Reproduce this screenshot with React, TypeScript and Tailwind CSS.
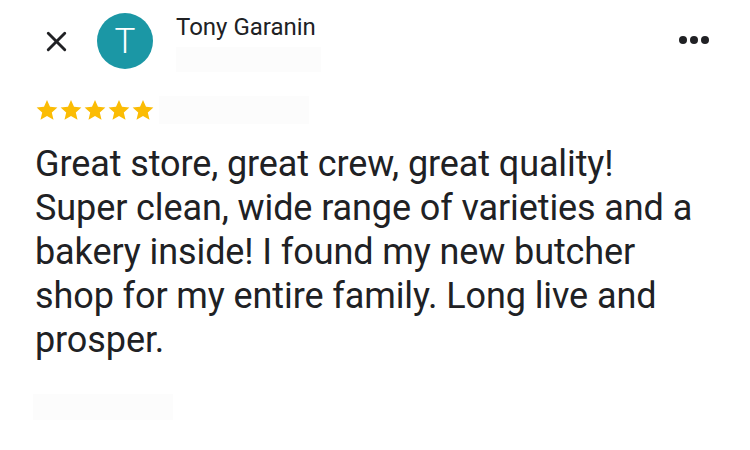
import { X } from 'lucide-react';

function Star() {
  return (
    <svg viewBox="0 0 24 24" className="w-[24px] h-[24px]" fill="#fbbc04">
      <path d="M12 2l3 6.8 7.4.7-5.6 4.9 1.7 7.3L12 17.9l-6.5 3.8 1.7-7.3-5.6-4.9 7.4-.7z" />
    </svg>
  );
}

export default function App() {
  return (
    <div className="w-[750px] h-[450px] bg-white relative overflow-hidden font-['Roboto',sans-serif] text-[#202124]">
      {/* Header */}
      <div className="flex items-start pt-[13px]">
        <div className="w-[97px] h-[56px] flex items-center justify-end pr-[24px]">
          <X size={33} strokeWidth={2.1} className="text-[#202124]" />
        </div>
        <div className="w-[56px] h-[56px] rounded-full bg-[#1b97a5] flex items-center justify-center text-white text-[35px] font-light leading-none">
          T
        </div>
        <div className="ml-[23px] flex flex-col">
          <div className="text-[24px] leading-[28px]">Tony Garanin</div>
          <div className="mt-[6px] w-[145px] h-[25px] bg-[#fcfcfc]" />
        </div>
        <div className="ml-auto mr-[41px] mt-[23px] flex gap-[3px]">
          <span className="w-[8px] h-[8px] rounded-full bg-[#202124]" />
          <span className="w-[8px] h-[8px] rounded-full bg-[#202124]" />
          <span className="w-[8px] h-[8px] rounded-full bg-[#202124]" />
        </div>
      </div>

      {/* Rating */}
      <div className="pl-[35px] mt-[24px] flex items-center">
        <div className="flex">
          <Star />
          <Star />
          <Star />
          <Star />
          <Star />
        </div>
        <div className="ml-[4px] w-[150px] h-[28px] bg-[#fcfcfc]" />
      </div>

      {/* Review */}
      <p className="pl-[35px] mt-[18px] text-[36px] leading-[44px] tracking-[-0.1px]">
        Great store, great crew, great quality!
        <br />
        Super clean, wide range of varieties and a
        <br />
        bakery inside! I found my new butcher
        <br />
        shop for my entire family. Long live and
        <br />
        prosper.
      </p>

      <div className="ml-[33px] mt-[32px] w-[140px] h-[26px] bg-[#fcfcfc]" />
    </div>
  );
}
